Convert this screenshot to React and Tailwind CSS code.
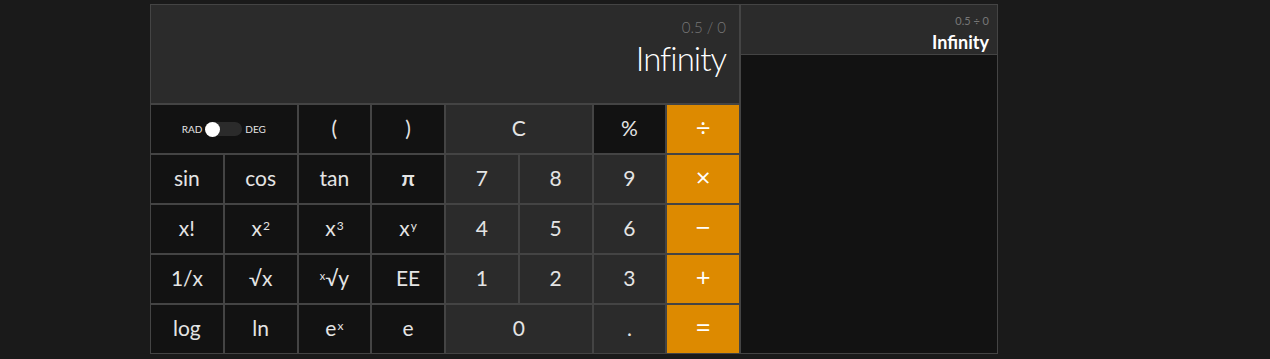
import React, { useState } from 'react';

const fn = 'bg-[#121212]';
const num = 'bg-[#2b2b2b]';
const op = 'bg-[#dd8a00] text-white';

const App = () => {
  const [deg, setDeg] = useState(false);

  const Sup = ({ base, exp }) => (
    <span>
      {base}
      <sup className="text-[12px] ml-[1px]">{exp}</sup>
    </span>
  );

  const Op = ({ children }) => (
    <span className="text-[26px] font-normal" style={{ fontFamily: '"Open Sans", sans-serif' }}>
      {children}
    </span>
  );

  const buttons = [
    { key: 'toggle', cls: `${fn} col-span-2` },
    { label: '(', cls: fn },
    { label: ')', cls: fn },
    { label: 'C', cls: `${num} col-span-2` },
    { label: '%', cls: fn },
    { label: <Op>÷</Op>, cls: op },

    { label: 'sin', cls: fn },
    { label: 'cos', cls: fn },
    { label: 'tan', cls: fn },
    { label: <span className="font-bold">π</span>, cls: fn },
    { label: '7', cls: num },
    { label: '8', cls: num },
    { label: '9', cls: num },
    { label: <Op>×</Op>, cls: op },

    { label: 'x!', cls: fn },
    { label: <Sup base="x" exp="2" />, cls: fn },
    { label: <Sup base="x" exp="3" />, cls: fn },
    { label: <Sup base="x" exp="y" />, cls: fn },
    { label: '4', cls: num },
    { label: '5', cls: num },
    { label: '6', cls: num },
    { label: <Op>−</Op>, cls: op },

    { label: '1/x', cls: fn },
    { label: '√x', cls: fn },
    {
      label: (
        <span>
          <sup className="text-[11px]">x</sup>√y
        </span>
      ),
      cls: fn,
    },
    { label: 'EE', cls: fn },
    { label: '1', cls: num },
    { label: '2', cls: num },
    { label: '3', cls: num },
    { label: <Op>+</Op>, cls: op },

    { label: 'log', cls: fn },
    { label: 'ln', cls: fn },
    { label: <Sup base="e" exp="x" />, cls: fn },
    { label: 'e', cls: fn },
    { label: '0', cls: `${num} col-span-2` },
    { label: '.', cls: num },
    { label: <Op>=</Op>, cls: op },
  ];

  return (
    <div
      className="min-h-screen h-[359px] bg-[#1a1a1a] pl-[150px] pt-[4px] flex items-start text-[#e4e4e4]"
      style={{ fontFamily: 'Lato, "Open Sans", sans-serif' }}
    >
      {/* Calculator */}
      <div className="w-[590px] h-[350px] bg-[#444] p-[1px] flex flex-col gap-[2px]">
        <div className="h-[98px] bg-[#2b2b2b] flex flex-col items-end justify-start pr-[13px] pt-[15px]">
          <div className="text-[15px] text-[#777] font-light leading-none">0.5 / 0</div>
          <div className="text-[33px] font-light leading-none mt-[7px] text-white tracking-[-1px]">Infinity</div>
        </div>
        <div className="flex-1 grid grid-cols-8 grid-rows-5 gap-[2px]">
          {buttons.map((b, i) =>
            b.key === 'toggle' ? (
              <div key={i} className={`${b.cls} flex items-center justify-center gap-[3px] text-[10px]`}>
                <span>RAD</span>
                <button
                  onClick={() => setDeg(!deg)}
                  className={`w-[37px] h-[14px] rounded-full bg-[#2b2b2b] flex items-center ${deg ? 'justify-end' : 'justify-start'}`}
                >
                  <span className="w-[15px] h-[15px] rounded-full bg-white block" />
                </button>
                <span>DEG</span>
              </div>
            ) : (
              <button
                key={i}
                className={`${b.cls} flex items-center justify-center text-[21px] font-normal leading-none pb-[4px]`}
              >
                {b.label}
              </button>
            )
          )}
        </div>
      </div>

      {/* History */}
      <div className="w-[258px] h-[350px] border border-[#444] bg-[#121212] flex flex-col">
        <div className="h-[50px] bg-[#2b2b2b] border-b border-[#444] flex flex-col items-end justify-start pt-[10px] pr-[8px]">
          <div className="text-[11px] text-[#777] leading-none">0.5 ÷ 0</div>
          <div className="text-[18px] font-bold leading-none mt-[7px] text-white">Infinity</div>
        </div>
      </div>
    </div>
  );
};

export default App;
